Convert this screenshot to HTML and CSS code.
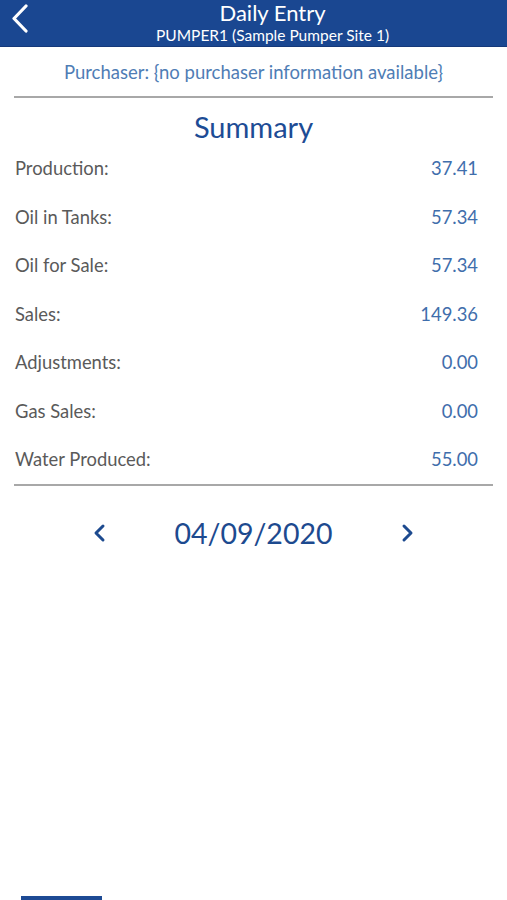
FILE: index.html
```html
<!DOCTYPE html>
<html lang="en">

<head>
    <meta charset="UTF-8">
    <meta name="viewport" content="width=device-width, initial-scale=1.0">
    <title>Daily Entry</title>
    <link rel="stylesheet" href="styles.css">
</head>

<body>
    <div class="page">
        <div class="header">
            <a class="backBtn">
                <svg width="20" height="30" viewBox="0 0 20 30">
                    <polyline points="16,3 4,15.5 16,28" fill="none" stroke="#fff" stroke-width="3.2"
                        stroke-linecap="round" stroke-linejoin="round" />
                </svg>
            </a>
            <div class="title">Daily Entry</div>
            <div class="subtitle">PUMPER1 (Sample Pumper Site 1)</div>
        </div>

        <div class="purchaser">Purchaser: {no purchaser information available}</div>
        <div class="line"></div>

        <div class="summaryTitle">Summary</div>
        <div class="rows">
            <div class="row"><span class="label">Production:</span><span class="value">37.41</span></div>
            <div class="row"><span class="label">Oil in Tanks:</span><span class="value">57.34</span></div>
            <div class="row"><span class="label">Oil for Sale:</span><span class="value">57.34</span></div>
            <div class="row"><span class="label">Sales:</span><span class="value">149.36</span></div>
            <div class="row"><span class="label">Adjustments:</span><span class="value">0.00</span></div>
            <div class="row"><span class="label">Gas Sales:</span><span class="value">0.00</span></div>
            <div class="row"><span class="label">Water Produced:</span><span class="value">55.00</span></div>
        </div>
        <div class="line"></div>

        <div class="dateBox">
            <a class="arrow">
                <svg width="14" height="20" viewBox="0 0 14 20">
                    <polyline points="11,3 4,10 11,17" fill="none" stroke="#1d4a8f" stroke-width="3"
                        stroke-linecap="round" stroke-linejoin="round" />
                </svg>
            </a>
            <span class="date">04/09/2020</span>
            <a class="arrow">
                <svg width="14" height="20" viewBox="0 0 14 20">
                    <polyline points="3,3 10,10 3,17" fill="none" stroke="#1d4a8f" stroke-width="3"
                        stroke-linecap="round" stroke-linejoin="round" />
                </svg>
            </a>
        </div>

        <div class="tabBar">
            <span class="tab"></span>
        </div>
    </div>
</body>

</html>
```

FILE: styles.css
```css
html {
    width: 100%;
    height: 100%;
}

body {
    margin: 0;
    height: 100%;
    background-color: #fff;
    font-family: "Lato", "Liberation Sans", sans-serif;
}

.page {
    display: flex;
    flex-direction: column;
    min-height: 100%;
}

.header {
    position: relative;
    height: 47px;
    padding-left: 38px;
    background-color: #1a4791;
    border-bottom: 1px solid #15397a;
    box-sizing: border-box;
    color: white;
    text-align: center;
}

.backBtn {
    position: absolute;
    left: 10px;
    top: 3px;
    cursor: pointer;
}

.title {
    font-size: 22px;
    line-height: 26.5px;
}

.subtitle {
    margin-top: -1px;
    font-size: 15.5px;
    line-height: 18px;
}

.purchaser {
    height: 49px;
    display: flex;
    align-items: center;
    justify-content: center;
    font-size: 18.5px;
    color: #4f7db5;
}

.line {
    margin: 0 14px;
    height: 2px;
    background-color: #a8a8a8;
}

.summaryTitle {
    padding-top: 12px;
    line-height: 34px;
    font-size: 29px;
    text-align: center;
    color: #1d4c95;
}

.rows {
    display: flex;
    flex-direction: column;
}

.row {
    height: 48.5px;
    display: flex;
    align-items: center;
    justify-content: space-between;
    padding: 0 29px 0 15px;
    font-size: 18.4px;
}

.label {
    color: #5a5a5a;
}

.value {
    color: #3f6eac;
}

.dateBox {
    display: flex;
    align-items: center;
    justify-content: center;
    gap: 68px;
    height: 94px;
    color: #1d4a8f;
}

.date {
    font-size: 28.5px;
}

.arrow {
    display: flex;
    cursor: pointer;
}

.tabBar {
    margin-top: auto;
    padding-left: 21px;
    display: flex;
    align-items: flex-end;
}

.tab {
    width: 81px;
    height: 4px;
    background-color: #1d4a94;
}
```
